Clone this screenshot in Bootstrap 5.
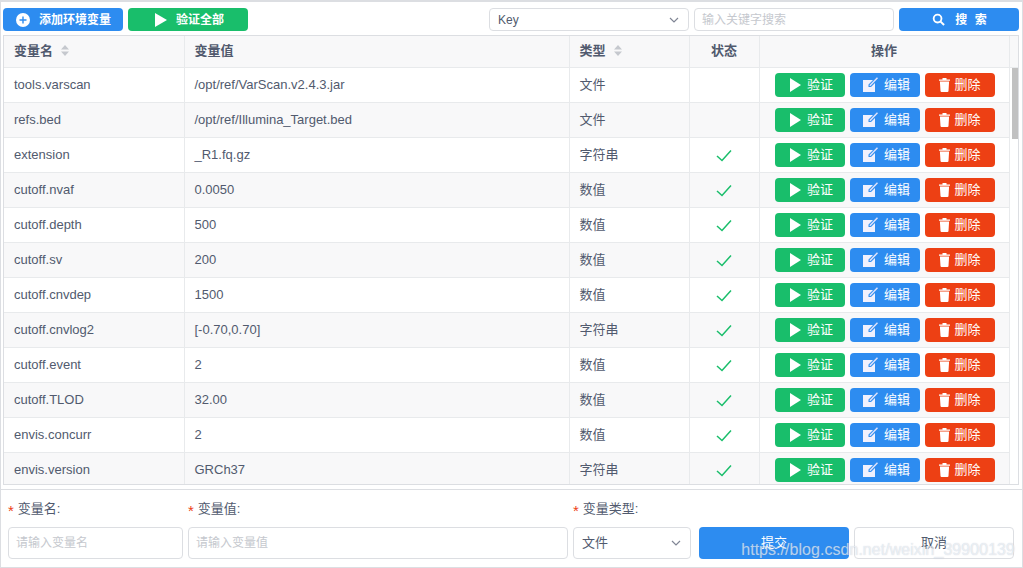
<!DOCTYPE html>
<html lang="zh-CN">
<head>
    <meta charset="UTF-8">
    <meta name="viewport" content="width=device-width, initial-scale=1">
    <title>环境变量</title>
    <link rel="stylesheet" href="https://cdn.jsdelivr.net/npm/bootstrap@5.3.0/dist/css/bootstrap.min.css">
    <style>
      html, body { height: 100%; overflow: hidden; }
      body { font-family: "Liberation Sans", "Noto Sans CJK SC", sans-serif; font-size: 13px; color: #515a6e; background: #fff; }
      .page-frame { position: relative; width: 1023px; height: 568px; border: 1px solid #dcdee2; border-top-width: 2px; }
      .tool-row { height: 33px; padding: 6px 3px 0 2px; }
      .ui-btn { display: inline-flex; align-items: center; justify-content: center; border: 0; border-radius: 4px; color: #fff; font-size: 12px; font-weight: 700; padding: 0; }
      .ui-btn:hover, .ui-btn:active { color: #fff; }
      .c-blue, .c-blue:hover { background: #2d8cf0; }
      .c-green, .c-green:hover { background: #19be6b; }
      .c-red, .c-red:hover { background: #ed4014; }
      .top-btn { width: 120px; height: 23px; gap: 9px; padding-left: 1px; }
      .next-btn { margin-left: 5px; padding-left: 3px; }
      .ui-select, .ui-input { display: flex; align-items: center; justify-content: space-between; background: #fff; border: 1px solid #dcdee2; border-radius: 4px; padding: 0 8px; color: #515a6e; font-size: 12px; }
      .ui-input { padding-left: 7px; }
      .ph-text { color: #c5c8ce; }
      .key-select { width: 200px; height: 23px; margin-left: 241px; }
      .key-input { width: 200px; height: 23px; margin-left: 5px; }
      .find-btn { width: 120px; height: 23px; margin-left: 5px; letter-spacing: 2px; gap: 10px; padding-left: 3px; }
      .table-box { position: relative; height: 450px; margin: 0 3px 0 2px; border: 1px solid #dcdee2; overflow: hidden; }
      .var-table { table-layout: fixed; width: 1014px; margin: 0; border-collapse: collapse; color: #515a6e; }
      .var-table th, .var-table td { height: 35px; padding: 0 10px; vertical-align: middle; border: 1px solid #e8eaec; border-top: 0; background: #fff; color: #515a6e; font-size: 13px; box-shadow: none; white-space: nowrap; }
      .var-table th { height: 31px; padding-bottom: 2px; background: #f8f8f9; font-weight: 700; }
      .var-table tbody tr:nth-child(even) td { background: #f8f8f9; }
      .var-table tbody tr td:last-child { background: #fff; border-bottom: 0; border-right: 0; }
      .var-table th:last-child { border-right: 0; }
      .var-table th:first-child, .var-table td:first-child { border-left: 0; }
      .sort-arrows { display: inline-block; width: 8px; height: 11px; margin-left: 8px; vertical-align: -1px; }
      .btn-set { gap: 5px; margin-left: 2px; }
      .row-btn { width: 70px; height: 24px; font-weight: 400; font-size: 13px; gap: 6px; padding-left: 3px; }
      .row-btn.del-btn { gap: 4px; padding-left: 0; }
      .thumb-bar { position: absolute; right: 0; top: 32px; width: 6px; height: 71px; background: #c1c1c1; }
      .form-row-wrap { height: 79px; margin-top: 4px; border-top: 1px solid #dcdee2; padding: 0 7px; }
      .field-name { width: 175px; }
      .field-value { width: 380px; margin-left: 5px; }
      .field-type { width: 118px; margin-left: 5px; }
      .field-label { height: 37px; padding-top: 9px; font-size: 13px; color: #515a6e; white-space: nowrap; }
      .req-star { color: #ed4014; margin-right: 4px; font-size: 15px; line-height: 1; vertical-align: -3px; }
      .field-box { height: 32px; width: 100%; }
      .field-type .ui-select { font-size: 13px; }
      .save-btn { width: 150px; height: 32px; margin-left: 8px; margin-top: 37px; font-weight: 400; font-size: 13px; }
      .cancel-btn { width: 160px; height: 32px; margin-left: 5px; margin-top: 37px; background: #fff; border: 1px solid #dcdee2; border-radius: 4px; color: #515a6e; font-size: 13px; display: flex; align-items: center; justify-content: center; }
      .water-mark { position: absolute; right: 7px; bottom: 6px; color: rgba(255,255,255,.62); font-size: 16.1px; text-shadow: 0 0 1px rgba(120,140,170,.45); white-space: nowrap; }
    </style>
</head>
<body>
  <div class="page-frame">
    <div class="tool-row d-flex align-items-start">
      <button class="btn ui-btn c-blue top-btn"><svg width="14" height="14" viewBox="0 0 14 14"><circle cx="7" cy="7" r="7" fill="#fff"/><path d="M7 3.5v7M3.5 7h7" stroke="#2d8cf0" stroke-width="1.4"/></svg>添加环境变量</button>
      <button class="btn ui-btn c-green top-btn next-btn"><svg width="12" height="14" viewBox="0 0 12 14"><path d="M0 0l12 7-12 7z" fill="#fff"/></svg>验证全部</button>
      <div class="ui-select key-select"><span>Key</span><svg width="12" height="12" viewBox="0 0 12 12"><path d="M2 4l4 4 4-4" fill="none" stroke="#808695" stroke-width="1.2"/></svg></div>
      <div class="ui-input key-input"><span class="ph-text">输入关键字搜索</span></div>
      <button class="btn ui-btn c-blue find-btn"><svg width="13" height="13" viewBox="0 0 14 14"><circle cx="6" cy="6" r="4.2" fill="none" stroke="#fff" stroke-width="2"/><path d="M9 9l4 4" stroke="#fff" stroke-width="2.2"/></svg>搜 索</button>
    </div>
    <div class="table-box">
      <table class="table var-table">
        <colgroup><col style="width:180px"><col style="width:385px"><col style="width:120px"><col style="width:70px"><col style="width:250px"><col style="width:9px"></colgroup>
        <thead>
          <tr>
            <th>变量名<svg class="sort-arrows" viewBox="0 0 8 11"><path d="M4 0l4 4.5H0zM4 11L0 6.500h8z" fill="#c5c8ce"/></svg></th>
            <th>变量值</th>
            <th>类型<svg class="sort-arrows" viewBox="0 0 8 11"><path d="M4 0l4 4.5H0zM4 11L0 6.500h8z" fill="#c5c8ce"/></svg></th>
            <th class="text-center">状态</th>
            <th class="text-center">操作</th>
            <th></th>
          </tr>
        </thead>
        <tbody id="var-rows"></tbody>
      </table>
      <div class="thumb-bar"></div>
    </div>
    <div class="form-row-wrap d-flex">
      <div class="field-name"><div class="field-label"><span class="req-star">*</span>变量名:</div><div class="ui-input field-box"><span class="ph-text">请输入变量名</span></div></div>
      <div class="field-value"><div class="field-label"><span class="req-star">*</span>变量值:</div><div class="ui-input field-box"><span class="ph-text">请输入变量值</span></div></div>
      <div class="field-type"><div class="field-label"><span class="req-star">*</span>变量类型:</div><div class="ui-select field-box"><span>文件</span><svg width="12" height="12" viewBox="0 0 12 12"><path d="M2 4l4 4 4-4" fill="none" stroke="#808695" stroke-width="1.2"/></svg></div></div>
      <button class="btn ui-btn c-blue save-btn">提交</button>
      <div class="cancel-btn">取消</div>
    </div>
    <div class="water-mark">https://blog.csdn.net/weixin_39900139</div>
  </div>
  <script src="https://cdn.jsdelivr.net/npm/bootstrap@5.3.0/dist/js/bootstrap.bundle.min.js"></script>
  <script>
    const rows = [
      ['tools.varscan', '/opt/ref/VarScan.v2.4.3.jar', '文件', false],
      ['refs.bed', '/opt/ref/Illumina_Target.bed', '文件', false],
      ['extension', '_R1.fq.gz', '字符串', true],
      ['cutoff.nvaf', '0.0050', '数值', true],
      ['cutoff.depth', '500', '数值', true],
      ['cutoff.sv', '200', '数值', true],
      ['cutoff.cnvdep', '1500', '数值', true],
      ['cutoff.cnvlog2', '[-0.70,0.70]', '字符串', true],
      ['cutoff.event', '2', '数值', true],
      ['cutoff.TLOD', '32.00', '数值', true],
      ['envis.concurr', '2', '数值', true],
      ['envis.version', 'GRCh37', '字符串', true]
    ];
    const check = `<svg width="16" height="13" viewBox="0 0 16 13"><path d="M1 7l5 4.500L15 1.500" fill="none" stroke="#19be6b" stroke-width="1.500"/></svg>`;
    document.getElementById('var-rows').innerHTML = rows.map(r => `
      <tr>
        <td>${r[0]}</td>
        <td>${r[1]}</td>
        <td>${r[2]}</td>
        <td class="text-center">${r[3] ? check : ''}</td>
        <td>
          <div class="d-flex justify-content-center btn-set">
            <button class="btn ui-btn c-green row-btn"><svg width="11" height="14" viewBox="0 0 11 14"><path d="M0 0l11 7-11 7z" fill="#fff"/></svg>验证</button>
            <button class="btn ui-btn c-blue row-btn"><svg width="15" height="15" viewBox="0 0 15 15"><path d="M0 3h10L5.500 7.500V10h2.500L12 6v9H0z" fill="#f1f1fd"/><path d="M6.800 8.700L14.500.8" stroke="#dfe3fb" stroke-width="1.500"/></svg>编辑</button>
            <button class="btn ui-btn c-red row-btn del-btn"><svg width="11" height="14" viewBox="0 0 11 14"><path d="M0 1.500h11v1.300H0zM3.500 0h4v1.500h-4zM.9 3.600h9.200l-.6 9.400q-.1 1-1 1h-6q-.9 0-1-1z" fill="#fff"/></svg>删除</button>
          </div>
        </td>
        <td></td>
      </tr>`).join('');
  </script>
</body>
</html>
